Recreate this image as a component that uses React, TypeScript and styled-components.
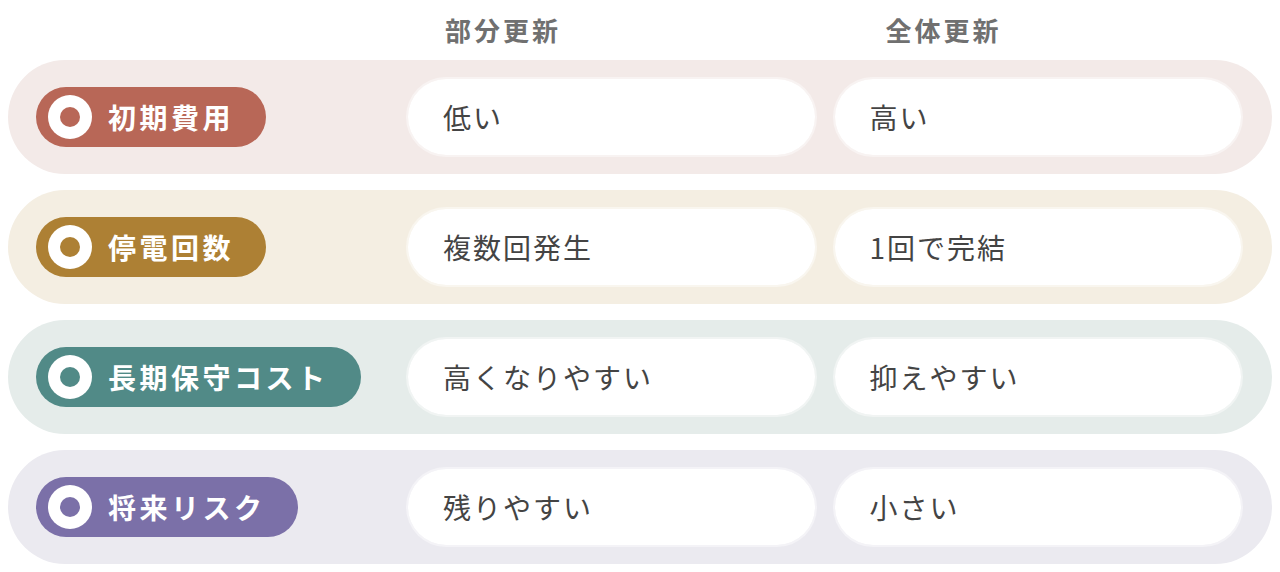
import React from 'react'
import styled, { createGlobalStyle } from 'styled-components'

const GlobalStyle = createGlobalStyle`
    html, body {
        margin: 0;
        padding: 0;
        background: #ffffff;
    }
    * {
        box-sizing: border-box;
    }
`

type Row = {
    label: string
    partial: string
    full: string
    accent: string
    tint: string
}

const rows: Row[] = [
    { label: '初期費用', partial: '低い', full: '高い', accent: '#b86757', tint: '#f3eae8' },
    { label: '停電回数', partial: '複数回発生', full: '1回で完結', accent: '#ad8034', tint: '#f4eee2' },
    { label: '長期保守コスト', partial: '高くなりやすい', full: '抑えやすい', accent: '#518a87', tint: '#e5ecea' },
    { label: '将来リスク', partial: '残りやすい', full: '小さい', accent: '#7b70a8', tint: '#ebeaf0' },
]

const Page = styled.div`
    width: 1280px;
    padding: 0 8px;
    font-family: 'Noto Sans CJK JP', 'Noto Sans', sans-serif;
`

const Grid = `
    display: grid;
    grid-template-columns: 354px 1fr 1fr;
    column-gap: 16px;
    padding: 0 29px 0 28px;
`

const Header = styled.div`
    ${Grid}
    height: 60px;
    align-items: center;
`

const HeaderCell = styled.div<{ $offset: number }>`
    padding-left: ${(p) => p.$offset}px;
    color: #707070;
    font-size: 26px;
    font-weight: 700;
    letter-spacing: 3px;
    line-height: 1;
`

const RowList = styled.div`
    display: flex;
    flex-direction: column;
    gap: 16px;
`

const RowBand = styled.div<{ $tint: string }>`
    ${Grid}
    height: 114px;
    align-items: center;
    border-radius: 57px;
    background: ${(p) => p.$tint};
`

const Label = styled.div<{ $accent: string }>`
    justify-self: start;
    display: flex;
    align-items: center;
    gap: 16px;
    height: 60px;
    padding: 0 32px 0 12px;
    border-radius: 30px;
    background: ${(p) => p.$accent};
    color: #ffffff;
    font-size: 28px;
    font-weight: 700;
    letter-spacing: 3.5px;
    line-height: 1;
`

const Ring = styled.span<{ $accent: string }>`
    display: flex;
    align-items: center;
    justify-content: center;
    width: 44px;
    height: 44px;
    border-radius: 50%;
    background: #ffffff;
    flex-shrink: 0;

    &::after {
        content: '';
        width: 20px;
        height: 20px;
        border-radius: 50%;
        background: ${(p) => p.$accent};
    }
`

const Cell = styled.div`
    display: flex;
    align-items: center;
    height: 80px;
    padding-left: 35px;
    border: 2px solid rgba(255, 255, 255, 0.45);
    background: #ffffff;
    background-clip: padding-box;
    border-radius: 40px;
    color: #444444;
    font-size: 28px;
    font-weight: 400;
    letter-spacing: 2px;
    line-height: 1;
`

export default function App() {
    return (
        <>
            <GlobalStyle />
            <Page>
                <Header>
                    <div />
                    <HeaderCell $offset={39}>部分更新</HeaderCell>
                    <HeaderCell $offset={53}>全体更新</HeaderCell>
                </Header>
                <RowList>
                    {rows.map((row) => (
                        <RowBand key={row.label} $tint={row.tint}>
                            <Label $accent={row.accent}>
                                <Ring $accent={row.accent} />
                                {row.label}
                            </Label>
                            <Cell>{row.partial}</Cell>
                            <Cell>{row.full}</Cell>
                        </RowBand>
                    ))}
                </RowList>
            </Page>
        </>
    )
}
